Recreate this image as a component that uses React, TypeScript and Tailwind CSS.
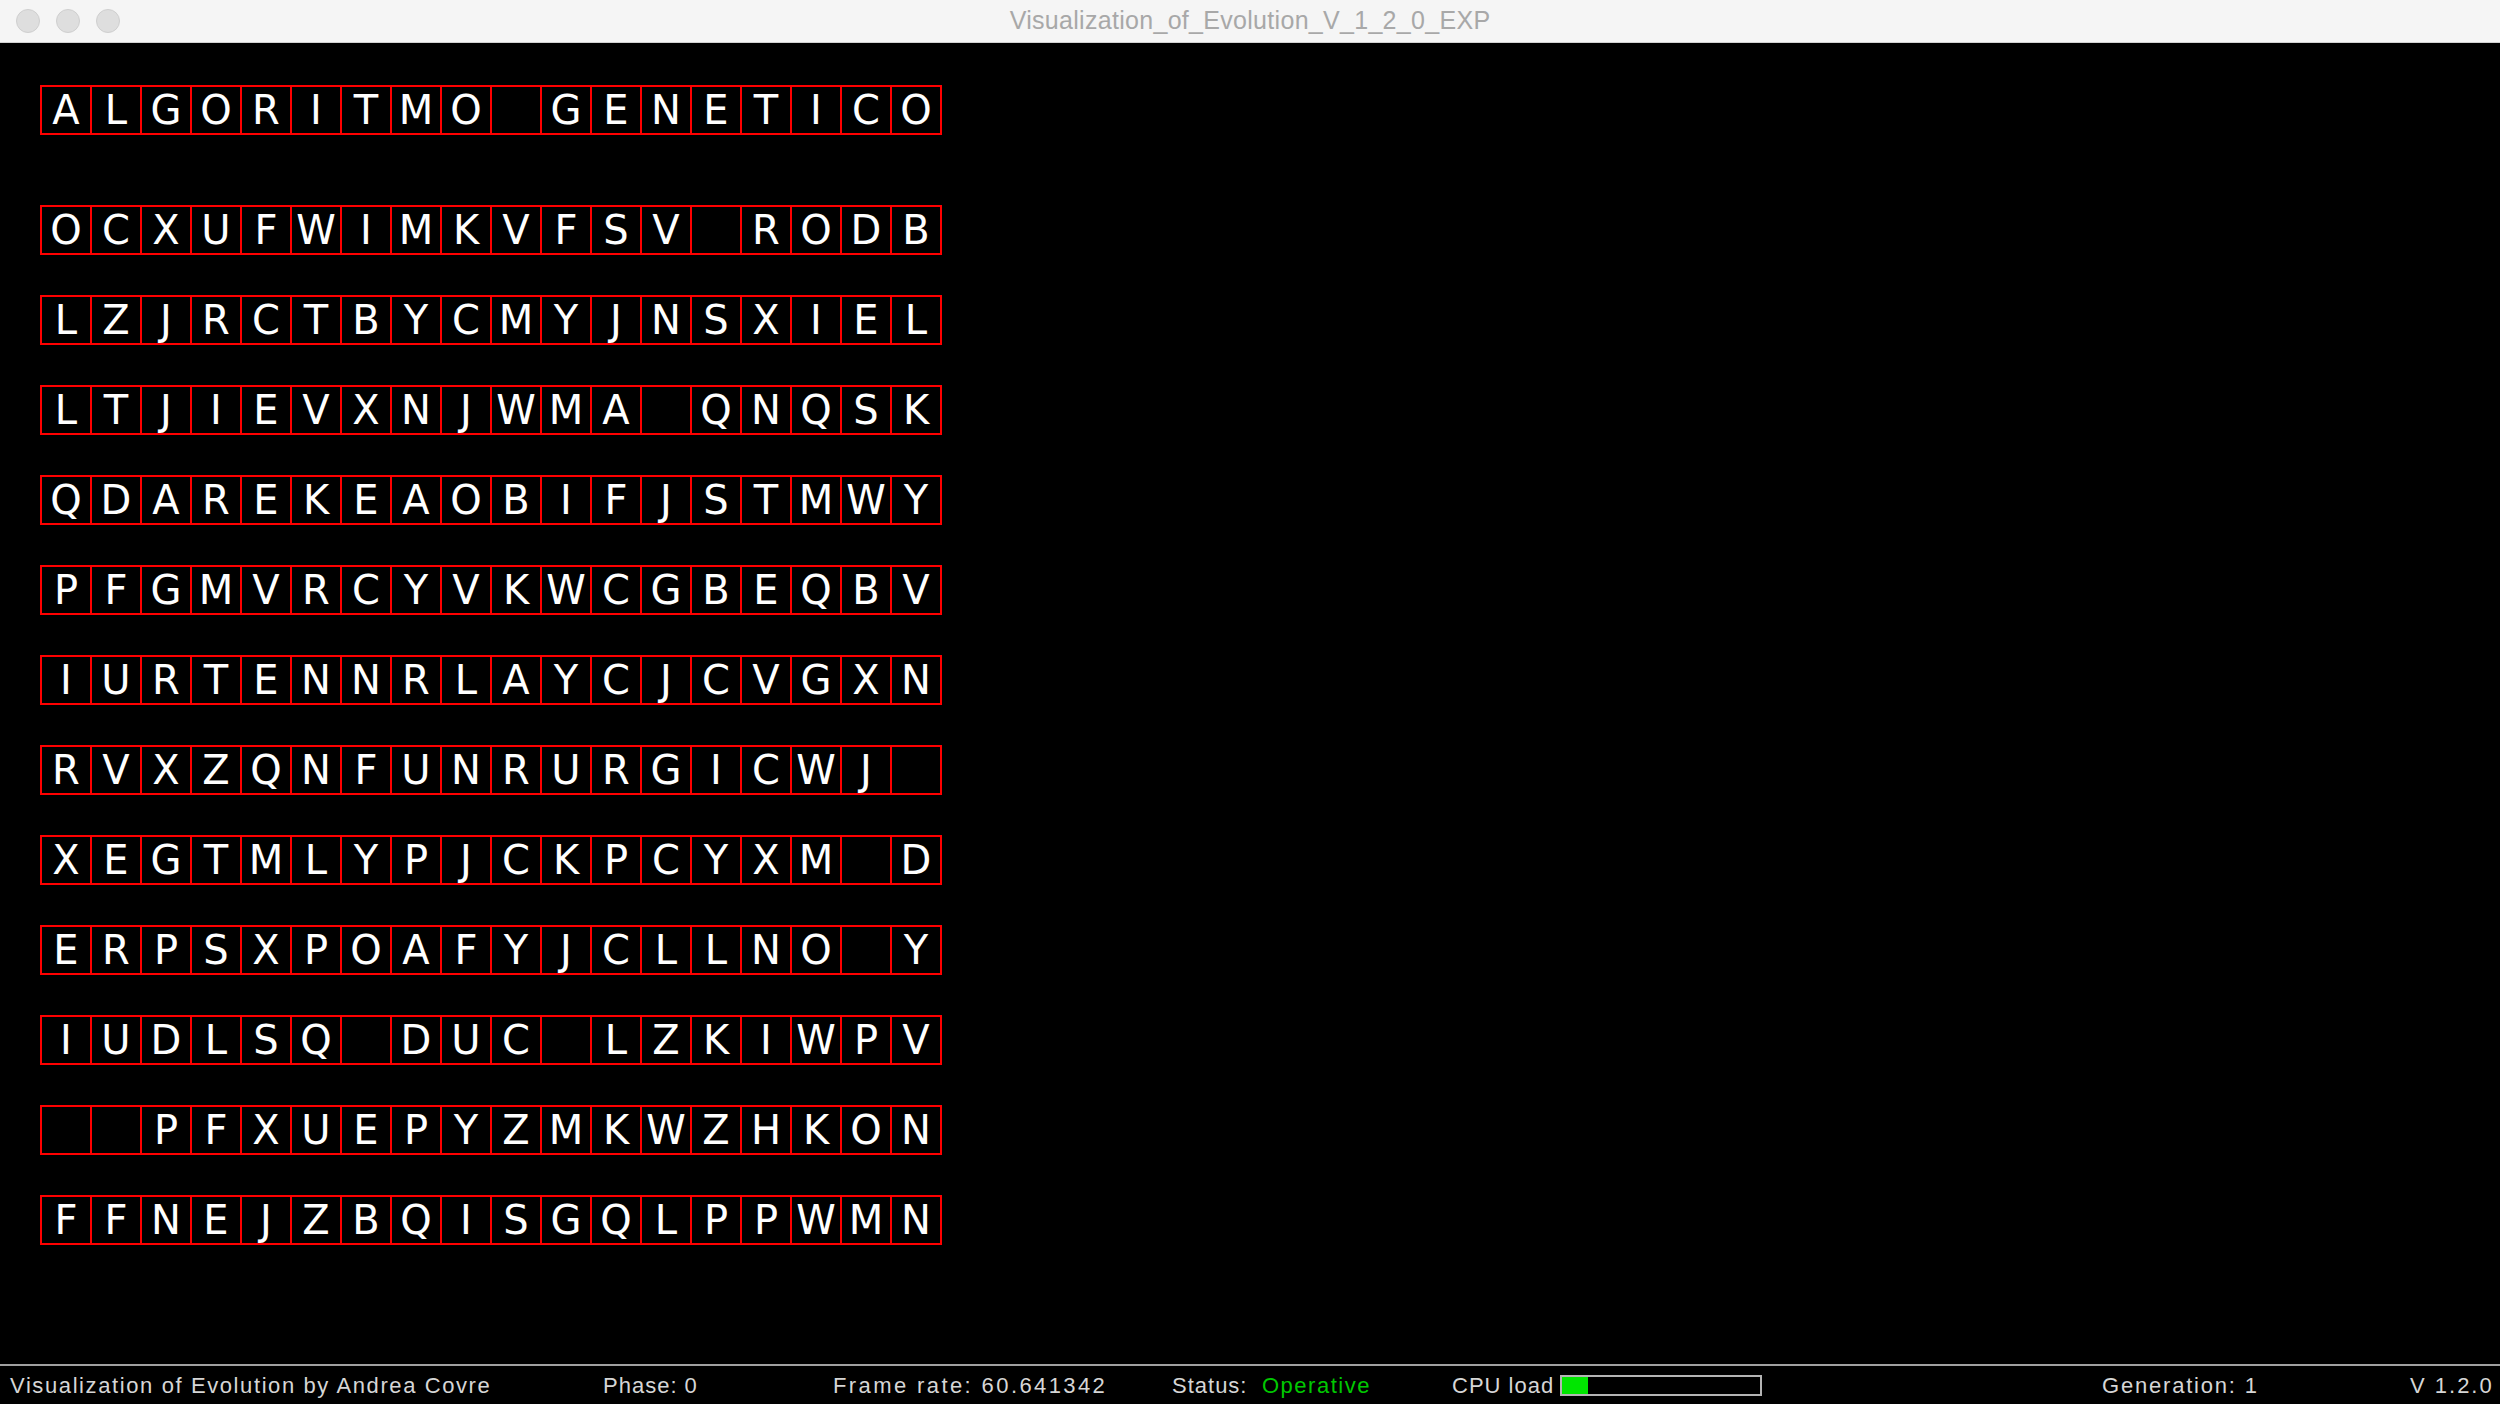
const target = "ALGORITMO GENETICO";

const population = [
  "OCXUFWIMKVFSV RODB",
  "LZJRCTBYCMYJNSXIEL",
  "LTJIEVXNJWMA QNQSK",
  "QDAREKEAOBIFJSTMWY",
  "PFGMVRCYVKWCGBEQBV",
  "IURTENNRLAYCJCVGXN",
  "RVXZQNFUNRURGICWJ ",
  "XEGTMLYPJCKPCYXM D",
  "ERPSXPOAFYJCLLNO Y",
  "IUDLSQ DUC LZKIWPV",
  "  PFXUEPYZMKWZHKON",
  "FFNEJZBQISGQLPPWMN",
];

function Genome({ text }: { text: string }) {
  return (
    <div className="flex w-fit border-y-2 border-l-2 border-[#ff0000]">
      {text.split("").map((ch, i) => (
        <div
          key={i}
          className="flex h-[46px] w-[50px] items-center justify-center border-r-2 border-[#ff0000] font-['DejaVu_Sans',sans-serif] text-[40px] leading-none text-white"
        >
          {ch === " " ? "" : ch}
        </div>
      ))}
    </div>
  );
}

function TitleBar() {
  return (
    <div className="relative flex h-[43px] items-center border-b border-[#d2d2d2] bg-[#f5f5f5]">
      <div className="flex gap-[16px] pl-[16px]">
        {[0, 1, 2].map((i) => (
          <div
            key={i}
            className="h-[24px] w-[24px] rounded-full border border-[#cfcfcf] bg-[#dedede]"
          />
        ))}
      </div>
      <div className="absolute inset-x-0 top-0 flex h-[42px] items-center justify-center font-['Liberation_Sans',sans-serif] text-[25px] tracking-[0.3px] text-[#a8a8a8]">
        Visualization_of_Evolution_V_1_2_0_EXP
      </div>
    </div>
  );
}

function StatusBar() {
  return (
    <div className="flex h-[40px] items-center border-t-2 border-[#a0a0a0] pl-[10px] font-['Liberation_Sans',sans-serif] text-[22px] text-[#d6d6d6]">
      <div className="w-[593px] tracking-[1.6px]">Visualization of Evolution by Andrea Covre</div>
      <div className="w-[230px] tracking-[1px]">Phase: 0</div>
      <div className="w-[339px] tracking-[2.4px]">Frame rate: 60.641342</div>
      <div className="w-[90px] tracking-[1px]">Status:</div>
      <div className="w-[190px] tracking-[1.5px] text-[#00c800]">Operative</div>
      <div className="w-[108px] tracking-[1px]">CPU load</div>
      <div className="flex h-[21px] w-[202px] border-2 border-[#b4b4b4]">
        <div className="h-full w-[26px] bg-[#00e600]" />
      </div>
      <div className="w-[340px]" />
      <div className="w-[308px] tracking-[1.8px]">Generation: 1</div>
      <div className="tracking-[2px]">V 1.2.0</div>
    </div>
  );
}

export default function App() {
  return (
    <div className="flex h-[1404px] w-[2500px] flex-col overflow-hidden bg-black">
      <TitleBar />
      <div className="flex-1 pl-[40px] pt-[42px]">
        <Genome text={target} />
        <div className="mt-[70px] flex flex-col gap-[40px]">
          {population.map((row, i) => (
            <Genome key={i} text={row} />
          ))}
        </div>
      </div>
      <StatusBar />
    </div>
  );
}
